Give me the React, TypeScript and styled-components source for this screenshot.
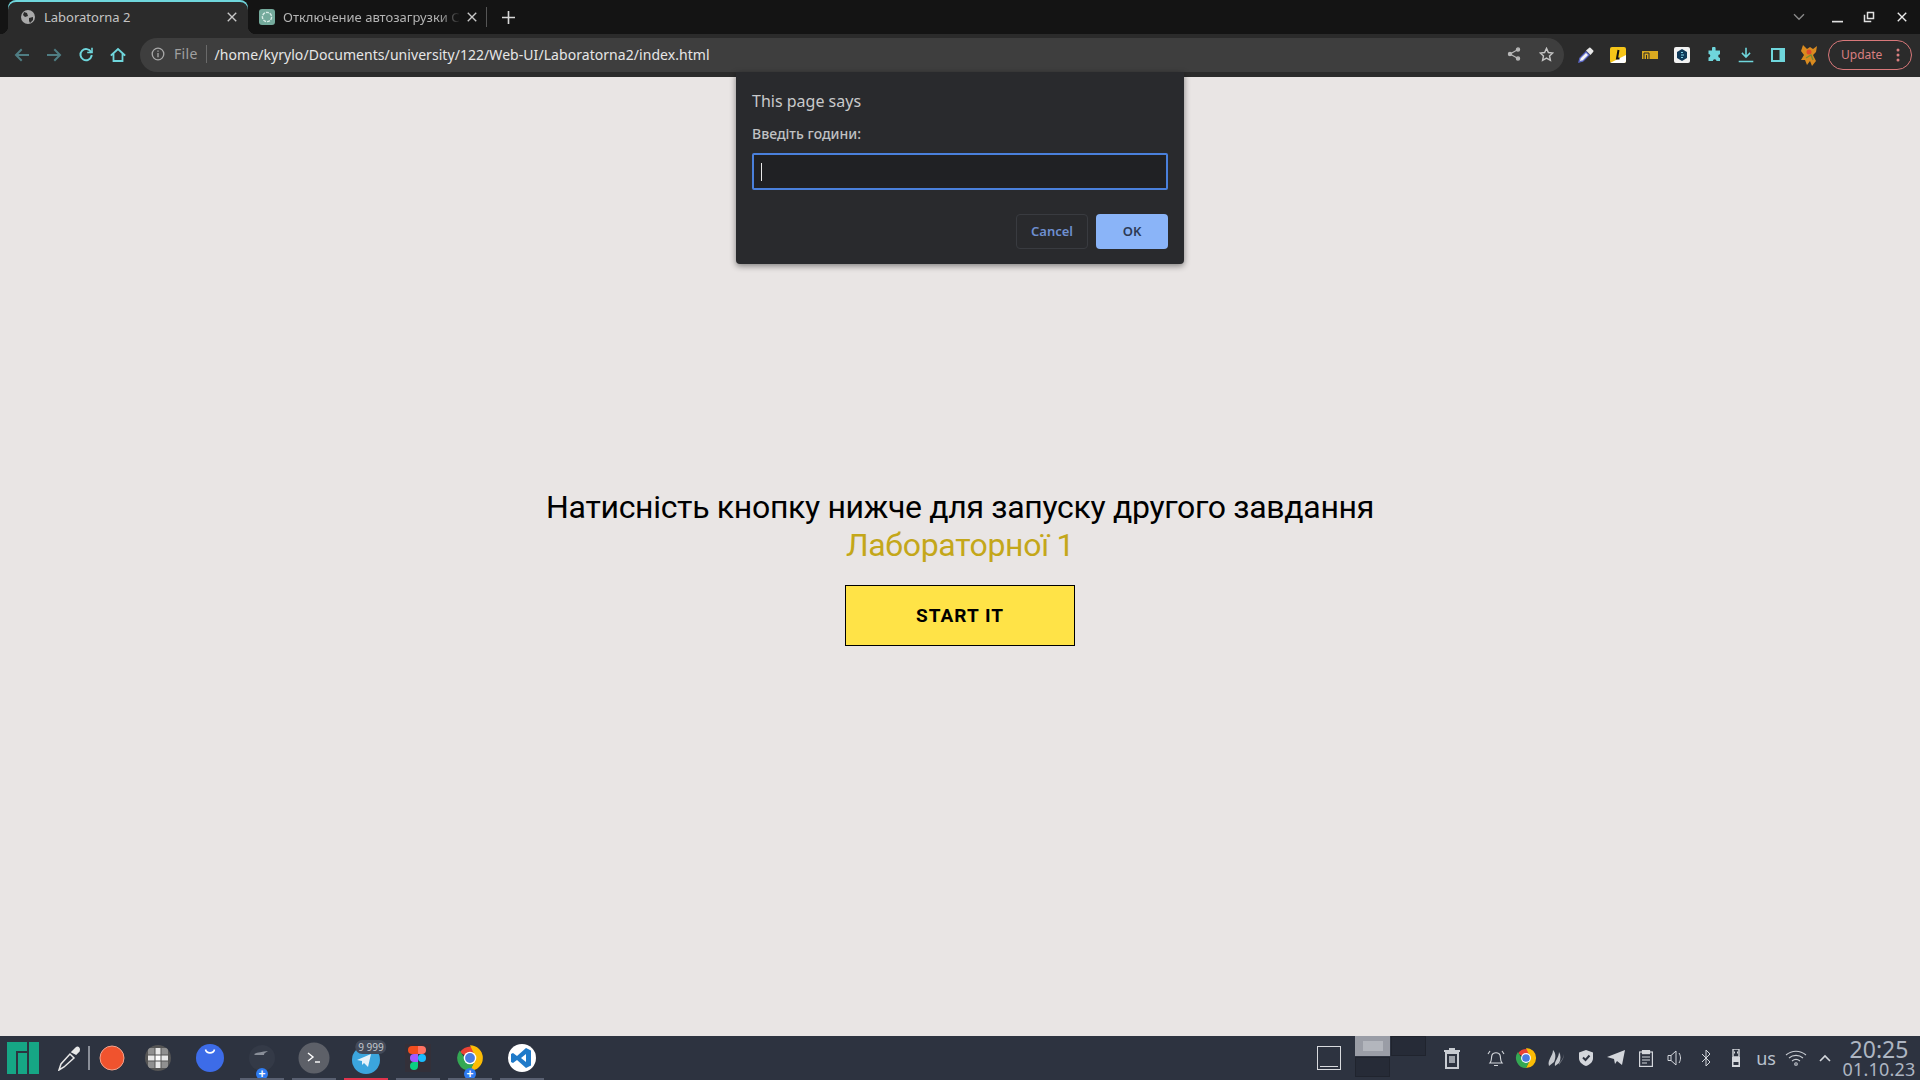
import React from "react";
import styled, { createGlobalStyle } from "styled-components";

const Global = createGlobalStyle`
  html, body { margin: 0; padding: 0; height: 100%; overflow: hidden; background: #e9e5e4; }
  #root { height: 100%; }
`;
const uiFont = `"Noto Sans", "Open Sans", sans-serif`;
const pageFont = `Roboto, "Liberation Sans", sans-serif`;

const Screen = styled.div`
  width: 1920px; height: 1080px; display: flex; flex-direction: column; position: relative; overflow: hidden;
  font-family: ${uiFont};
`;
const TabStrip = styled.div`
  height: 34px; flex: none; background: #141414; display: flex; align-items: stretch; padding-left: 8px; color: #c9c9c9;
`;
const ActiveTab = styled.div`
  width: 240px; display: flex; align-items: center; background: #2b2b2b; border-radius: 8px 8px 0 0; position: relative;
  padding: 0 11px 0 13px; box-sizing: border-box; gap: 9px; box-shadow: inset 0 2px 0 #6fd6dc;
  &::before, &::after { content: ""; position: absolute; bottom: 0; width: 8px; height: 8px; }
  &::before { left: -8px; background: radial-gradient(circle at 0 0, #141414 8px, #2b2b2b 8.5px); }
  &::after { right: -8px; background: radial-gradient(circle at 100% 0, #141414 8px, #2b2b2b 8.5px); }
`;
const IdleTab = styled.div`
  width: 238px; display: flex; align-items: center; padding: 0 9px 0 11px; box-sizing: border-box; gap: 8px;
  position: relative;
`;
const TabTitle = styled.span<{ $fade?: boolean }>`
  flex: 1; min-width: 0; font-size: 13px; white-space: nowrap; overflow: hidden; color: ${p => (p.$fade ? "#b4b4b4" : "#c4c4c4")};
  ${p => (p.$fade ? "mask-image: linear-gradient(90deg, #000 88%, rgba(0,0,0,.1) 100%);" : "")}
`;
const TabSep = styled.div`
  width: 1px; height: 20px; background: #555; align-self: center;
`;
const NewTab = styled.div`
  width: 42px; display: flex; align-items: center; justify-content: center;
`;
const StripRight = styled.div`
  margin-left: auto; display: flex; align-items: center; padding-right: 2px;
`;
const WinBtn = styled.div<{ $w: number; $gap?: number }>`
  width: ${p => p.$w}px; margin-left: ${p => p.$gap || 0}px; display: flex; justify-content: center; align-items: center;
`;
const Toolbar = styled.div`
  height: 43px; flex: none; background: #2b2b2b; display: flex; align-items: center; padding: 0 0 2px 6px; box-sizing: border-box;
`;
const NavBtn = styled.div`
  width: 32px; height: 32px; flex: none; display: flex; align-items: center; justify-content: center;
`;
const Omnibox = styled.div`
  width: 1424px; height: 34px; margin: 1px 6px 0 6px; background: #3e3e3e; border-radius: 17px; display: flex; align-items: center;
  padding: 0 0 2px 11px; box-sizing: border-box; flex: none; font-size: 14px;
`;
const OriginLabel = styled.span`
  color: #a0a0a0; font-size: 14px; margin-left: 9px; padding-right: 8px; border-right: 1px solid #6a6a6a; line-height: 18px; letter-spacing: .3px;
`;
const UrlText = styled.span`
  color: #e6e6e6; margin-left: 8px; font-size: 14px; letter-spacing: .055px;
`;
const OmniActions = styled.div`
  margin-left: auto; display: flex; padding-right: 2px;
`;
const UpdatePill = styled.div`
  margin-left: 2px; width: 84px; height: 30px; flex: none; border: 1px solid #d9787a; border-radius: 15px; box-sizing: border-box;
  display: flex; align-items: center; padding: 0 11px 0 12px; color: #d97f80; font-size: 12px; justify-content: space-between;
`;
const Page = styled.main`
  flex: 1; background: #e9e5e4; display: flex; flex-direction: column; align-items: center; padding-top: 411px; box-sizing: border-box;
  font-family: ${pageFont};
`;
const Heading = styled.h1`
  margin: 0; font-weight: 400; font-size: 32px; line-height: 38px; color: #000; text-align: center; letter-spacing: -0.32px;
`;
const Accent = styled.span`
  display: block; color: #c4a71a;
`;
const StartButton = styled.button`
  margin-top: 21px; width: 230px; height: 61px; background: #ffe347; border: 1px solid #000; font-family: ${pageFont};
  font-size: 19px; font-weight: 700; letter-spacing: 1px; color: #000; padding: 0;
`;
const Dialog = styled.div`
  position: absolute; left: 736px; top: 72px; width: 448px; height: 192px; background: #292a2d; border-radius: 0 0 4px 4px;
  box-shadow: 0 2px 6px rgba(0,0,0,.45); padding: 0 16px; box-sizing: border-box; display: flex; flex-direction: column;
`;
const DialogTitle = styled.div`
  color: #c8c9cb; font-size: 16px; line-height: 22px; margin-top: 18px;
`;
const DialogLabel = styled.div`
  color: #c0c1c3; font-size: 14px; font-weight: 500; line-height: 18px; margin-top: 13px;
`;
const PromptInput = styled.div`
  margin-top: 10px; height: 37px; background: #202124; border: 2px solid #4a80dc; border-radius: 2px; box-sizing: border-box;
  display: flex; align-items: center; padding-left: 7px;
`;
const Caret = styled.span`
  width: 1px; height: 18px; background: #e8e8e8;
`;
const DialogActions = styled.div`
  margin-top: 24px; display: flex; justify-content: flex-end; gap: 8px;
`;
const CancelBtn = styled.div`
  width: 72px; height: 35px; padding-bottom: 2px; border: 1px solid #393b40; border-radius: 4px; box-sizing: border-box; color: #6e8fd0;
  font-size: 13px; font-weight: 600; display: flex; align-items: center; justify-content: center;
`;
const OkBtn = styled(CancelBtn)`
  background: #8ab4f8; border: none; color: #2c3a55;
`;
const Taskbar = styled.footer`
  height: 44px; flex: none; background: #2d3340; display: flex; align-items: center; position: relative;
`;
const Slot = styled.div<{ $w: number; $pl?: number; $pt?: number }>`
  width: ${p => p.$w}px; height: 44px; flex: none; display: flex; align-items: center; justify-content: center; position: relative;
  box-sizing: border-box; padding: ${p => p.$pt || 0}px 0 0 ${p => p.$pl || 0}px;
`;
const Task = styled(Slot)<{ $bar?: string }>`
  &::after { content: ""; position: absolute; left: 4px; right: 4px; bottom: 0; height: 2px; background: ${p => p.$bar || "#596071"}; }
`;
const Divider = styled.div`
  width: 2px; height: 24px; flex: none; background: #8a8f99;
`;
const PlusBadge = styled.span`
  position: absolute; left: 50%; bottom: 0; transform: translateX(-50%); width: 12px; height: 12px; border-radius: 50%; background: #2f7bf0;
  color: #fff; font: 700 12px/12px "Liberation Sans", sans-serif; text-align: center; display: flex; align-items: center; justify-content: center;
`;
const CountBadge = styled.span`
  position: absolute; top: 4px; left: 50%; margin-left: 5px; transform: translateX(-50%); padding: 0 3px; height: 14px; line-height: 14px; border-radius: 7px;
  background: #434a59; color: #c2c6cc; font-size: 10px; white-space: nowrap;
`;
const Spacer = styled.div`
  flex: 1;
`;
const Pager = styled.div`
  width: 71px; height: 42px; flex: none; display: grid; grid-template-columns: 35px 35px; grid-template-rows: 20px 20px; gap: 1px; margin-top: -2px;
`;
const PagerCell = styled.div<{ $on?: boolean }>`
  background: ${p => (p.$on ? "#9a9da6" : "#262b37")}; display: flex; align-items: center; justify-content: center;
  outline: 1px solid ${p => (p.$on ? "#9a9da6" : "#20242e")}; outline-offset: -1px;
`;
const PagerThumb = styled.div`
  width: 20px; height: 10px; background: #b3b6bd;
`;
const TrayGap = styled.div`
  width: 14px; flex: none;
`;
const Layout = styled.span`
  color: #b8c0cc; font-size: 18px;
`;
const Clock = styled.div`
  width: 82px; flex: none; display: flex; flex-direction: column; align-items: center; color: #aeb6c2;
`;
const ClockTime = styled.span`
  font-size: 23px; line-height: 22px;
`;
const ClockDate = styled.span`
  font-size: 18px; line-height: 18px; letter-spacing: .2px;
`;

const teal = "#6fd6dc";
const Stroke = ({ s = 16, c = teal, w = 2, children }: { s?: number; c?: string; w?: number; children: React.ReactNode }) => (
  <svg width={s} height={s} viewBox="0 0 16 16" fill="none" stroke={c} strokeWidth={w} strokeLinecap="square">{children}</svg>
);
const Chrome = ({ s = 22 }: { s?: number }) => (
  <svg width={s} height={s} viewBox="0 0 24 24">
    <path d="M12 12 L3.2 7.2 A11 11 0 0 1 22 7.5 L12 7.5Z" fill="#ea4335" />
    <path d="M12 1 A11 11 0 0 1 12 23 L17 12 Z" fill="#fbbc05" />
    <path d="M3.2 5.5 A11 11 0 0 0 12 23 L17 13 L8 13Z" fill="#34a853" />
    <circle cx="12" cy="12" r="5.4" fill="#fff" />
    <circle cx="12" cy="12" r="4.2" fill="#4a7ce0" />
  </svg>
);
const Icon = {
  Globe: () => (
    <svg width="14" height="14" viewBox="0 0 14 14"><circle cx="7" cy="7" r="7" fill="#a9a9a9" /><path d="M3 2l3 1 1 3-3 1-2-2zM8 8l4-1 0 3-3 3-1-2z" fill="#2b2b2b" /></svg>
  ),
  Gpt: () => (
    <svg width="16" height="16" viewBox="0 0 16 16"><rect width="16" height="16" rx="3" fill="#74aa9c" /><circle cx="8" cy="8" r="4.6" fill="none" stroke="#d9ece7" strokeWidth="1.4" strokeDasharray="3 1" /></svg>
  ),
  X: ({ c = "#c9c9c9" }: { c?: string }) => <Stroke s={10} c={c} w={2.2}><path d="M2 2l12 12M14 2L2 14" /></Stroke>,
};

export default function App() {
  return (
    <Screen>
      <Global />
      <TabStrip>
        <ActiveTab>
          <Icon.Globe />
          <TabTitle>Laboratorna 2</TabTitle>
          <Icon.X />
        </ActiveTab>
        <IdleTab>
          <Icon.Gpt />
          <TabTitle $fade>Отключение автозагрузки С</TabTitle>
          <Icon.X />
        </IdleTab>
        <TabSep />
        <NewTab><Stroke s={13} c="#d8d8d8" w={2}><path d="M8 1v14M1 8h14" /></Stroke></NewTab>
        <StripRight>
          <WinBtn $w={32}><Stroke s={12} c="#8a8a8a" w={1.8}><path d="M2 5l6 6 6-6" /></Stroke></WinBtn>
          <WinBtn $w={32} $gap={6}><Stroke s={11} c="#e0e0e0" w={2.4}><path d="M1 14h14" /></Stroke></WinBtn>
          <WinBtn $w={32}>
            <Stroke s={12} c="#e0e0e0" w={2}><path d="M6 2h8v8H6zM2 6v8h8" /></Stroke>
          </WinBtn>
          <WinBtn $w={33}><Icon.X c="#ececec" /></WinBtn>
        </StripRight>
      </TabStrip>
      <Toolbar>
        <NavBtn><Stroke c="#4f7d83"><path d="M14 8H3M7 3L2 8l5 5" /></Stroke></NavBtn>
        <NavBtn><Stroke c="#4f7d83"><path d="M2 8h11M9 3l5 5-5 5" /></Stroke></NavBtn>
        <NavBtn><Stroke c={teal}><path d="M13 5a5.6 5.6 0 1 0 .5 4" /><path d="M10 5.5h4v-4" strokeWidth="1.6" /></Stroke></NavBtn>
        <NavBtn><Stroke c={teal} w={1.8}><path d="M1.5 8L8 2l6.5 6M3.5 7.5v6.5h9V7.5" /></Stroke></NavBtn>
        <Omnibox>
          <svg width="14" height="14" viewBox="0 0 14 14" fill="none" stroke="#a8a8a8" strokeWidth="1.3"><circle cx="7" cy="7" r="5.8" /><path d="M7 6v4.2M7 3.6v1.2" /></svg>
          <OriginLabel>File</OriginLabel>
          <UrlText>/home/kyrylo/Documents/university/122/Web-UI/Laboratorna2/index.html</UrlText>
          <OmniActions>
            <NavBtn><svg width="14" height="14" viewBox="0 0 14 14" fill="#b8b8b8" stroke="#b8b8b8" strokeWidth="1.2"><path d="M11 2.5L3 7l8 4.5" fill="none" /><circle cx="11" cy="2.5" r="1.6" /><circle cx="3" cy="7" r="1.6" /><circle cx="11" cy="11.5" r="1.6" /></svg></NavBtn>
            <NavBtn><svg width="15" height="15" viewBox="0 0 16 16" fill="none" stroke="#c4c4c4" strokeWidth="1.5"><path d="M8 1.5l2 4.4 4.7.5-3.5 3.2 1 4.7L8 11.9l-4.2 2.4 1-4.7L1.3 6.4 6 5.9z" /></svg></NavBtn>
          </OmniActions>
        </Omnibox>
        <NavBtn><svg width="16" height="16" viewBox="0 0 16 16"><path d="M1 15l1-4 6-6 3 3-6 6z" fill="#f4f4f4" stroke="#5c68c8" strokeWidth="1.3" /><path d="M8 3.500l3.500-3 1 .2 3 3-.2 1L12.500 8z" fill="#e8e8e8" /></svg></NavBtn>
        <NavBtn><svg width="16" height="16" viewBox="0 0 16 16"><rect width="16" height="16" rx="2" fill="#f5c518" /><path d="M0 16L16 8v6a2 2 0 0 1-2 2z" fill="#fff" /><path d="M8.500 3L7 11.500h2.500" fill="none" stroke="#111" strokeWidth="2" /></svg></NavBtn>
        <NavBtn><svg width="16" height="12" viewBox="0 0 16 12"><rect y="2" width="16" height="8" fill="#d9a920" /><path d="M2 10V4h5v6M4.500 10V6" fill="none" stroke="#2b2b2b" strokeWidth="1" /></svg></NavBtn>
        <NavBtn><svg width="16" height="16" viewBox="0 0 16 16"><rect width="16" height="16" rx="2" fill="#f2f2f2" /><path d="M8 2l5 3v6l-5 3-5-3V5z" fill="#103a5a" /><path d="M7 5.500h2M7 8h3M7 10.500h2" stroke="#7fd0e8" strokeWidth="1.2" /></svg></NavBtn>
        <NavBtn><svg width="16" height="16" viewBox="0 0 16 16" fill={teal}><path d="M6 1.500a1.800 1.800 0 0 1 3.600 0V3.500H14v3.800a1.800 1.800 0 0 0 0 3.600V14H10.500a1.800 1.800 0 0 0-3.600 0H2.500v-3.500a1.800 1.800 0 0 0 0-3.600V3.500H6z" /></svg></NavBtn>
        <NavBtn><Stroke c={teal} w={1.6}><path d="M8 1.500v8M4.500 6.500L8 10l3.500-3.500M1.500 14.500h13" /></Stroke></NavBtn>
        <NavBtn><svg width="14" height="14" viewBox="0 0 14 14"><path fill={teal} d="M0 0h14v14H0z" /><path fill="#2b2b2b" d="M2 2h6.500v10H2z" /></svg></NavBtn>
        <NavBtn>
          <svg width="20" height="22" viewBox="0 0 20 22">
            <path d="M3 1l4 4 3-2 3 2 4-3-1 6-3 3 3 6-4 5-2-5-3 4-2-5-4 0 3-5-3-4z" fill="#d98a1f" /><circle cx="9" cy="8" r="2.500" fill="#e24a2a" /><path d="M6 14l5-3 2 5" fill="none" stroke="#7a8a30" strokeWidth="1.4" />
          </svg>
        </NavBtn>
        <UpdatePill>
          Update
          <svg width="4" height="14" viewBox="0 0 4 14" fill="#d97f80"><circle cx="2" cy="2" r="1.500" /><circle cx="2" cy="7" r="1.500" /><circle cx="2" cy="12" r="1.500" /></svg>
        </UpdatePill>
      </Toolbar>
      <Page>
        <Heading>
          Натисність кнопку нижче для запуску другого завдання
          <Accent>Лабораторної 1</Accent>
        </Heading>
        <StartButton>START IT</StartButton>
      </Page>
      <Dialog>
        <DialogTitle>This page says</DialogTitle>
        <DialogLabel>Введіть години:</DialogLabel>
        <PromptInput><Caret /></PromptInput>
        <DialogActions>
          <CancelBtn>Cancel</CancelBtn>
          <OkBtn>OK</OkBtn>
        </DialogActions>
      </Dialog>
      <Taskbar>
        <Slot $w={46}>
          <svg width="32" height="32" viewBox="0 0 32 32" fill="#16a685"><path d="M0 0h20v9H9v23H0z" /><path d="M11 11h9v21h-9z" /><path d="M22 0h10v32H22z" /></svg>
        </Slot>
        <Slot $w={42} $pl={5}>
          <svg width="24" height="26" viewBox="0 0 24 26" fill="none" stroke="#e8e8e8" strokeWidth="1.5"><path d="M1 25l2-6 9-10 4 4-10 9z" fill="#2d3340" /><path d="M14 7l4-4c2-1.800 4 .2 3 3l-3 3z" fill="#e8e8e8" /></svg>
        </Slot>
        <Divider />
        <Slot $w={44}>
          <svg width="26" height="26" viewBox="0 0 26 26"><circle cx="13" cy="13" r="12" fill="#f0532e" stroke="#f2a58f" strokeWidth="1" /></svg>
        </Slot>
        <Slot $w={48}>
          <svg width="26" height="26" viewBox="0 0 26 26">
            <defs><clipPath id="gridClip"><circle cx="13" cy="13" r="13" /></clipPath></defs>
            <g clipPath="url(#gridClip)">
              <rect width="26" height="26" fill="#555" />
              <path fill="#909090" d="M3 3h6.500v6.500H3zM16.500 3H23v6.500h-6.500zM3 16.500h6.500V23H3zM16.500 16.500H23V23h-6.500z" />
              <path fill="#e8e8e8" d="M10.500 3h5v6.500h-5zM3 10.500h6.500v5H3zM16.500 10.500H23v5h-6.500zM10.500 16.500h5V23h-5z" />
              <path fill="#fff" d="M10.500 10.500h5v5h-5z" />
            </g>
          </svg>
        </Slot>
        <Slot $w={54} $pl={2}>
          <svg width="28" height="28" viewBox="0 0 28 28"><circle cx="14" cy="14" r="14" fill="#3d6ce8" /><path d="M9.500 5.500c1 4.500 8 4.500 9 0" fill="none" stroke="#fff" strokeWidth="1.6" /></svg>
        </Slot>
        <Task $w={52}>
          <svg width="26" height="26" viewBox="0 0 26 26"><circle cx="13" cy="13" r="13" fill="#343a47" /><path d="M5 9c4-2 8-2 14-3-3 2-4 2-4 4H6z" fill="#8a8f99" /></svg>
          <PlusBadge>+</PlusBadge>
        </Task>
        <Task $w={52}>
          <svg width="32" height="32" viewBox="0 0 32 32"><circle cx="16" cy="16" r="15.500" fill="#5d6068" /><path d="M10 11l5 4-5 4" fill="none" stroke="#fff" strokeWidth="1.400" /><path d="M17 20h5" stroke="#fff" strokeWidth="1.400" /></svg>
        </Task>
        <Task $w={52} $bar="#e0344d" $pt={4}>
          <svg width="28" height="28" viewBox="0 0 28 28"><circle cx="14" cy="14" r="14" fill="#3ba5dd" /><path d="M5 14l14-6-3 13-4-4-2 2v-4z" fill="#e6f2f9" /></svg>
          <CountBadge>9 999</CountBadge>
        </Task>
        <Task $w={52}>
          <svg width="26" height="28" viewBox="0 0 26 28">
            <rect width="26" height="28" fill="#333039" />
            <path d="M7 2h6v8H7a4 4 0 0 1 0-8z" fill="#f24e1e" /><path d="M13 2h4a4 4 0 0 1 0 8h-4z" fill="#ff7262" />
            <path d="M9 10h4v8H9a4 4 0 0 1 0-8z" fill="#a259ff" /><circle cx="17" cy="14" r="4" fill="#1abcfe" />
            <path d="M9 18h4v4a4 4 0 1 1-4-4z" fill="#0acf83" />
          </svg>
        </Task>
        <Task $w={52}>
          <Chrome s={28} />
          <PlusBadge>+</PlusBadge>
        </Task>
        <Task $w={52}>
          <svg width="28" height="28" viewBox="0 0 28 28"><circle cx="14" cy="14" r="14" fill="#fff" /><path d="M18 4l5 2.500v15L18 24 9 16l-4 3-2-1v-8l2-1 4 3zM18 10l-5 4 5 4z" fill="#1f7ac9" fillRule="evenodd" /></svg>
        </Task>
        <Spacer />
        <Slot $w={24}>
          <svg width="24" height="24" viewBox="0 0 24 24" fill="none" stroke="#d8dade" strokeWidth="1"><rect x=".5" y=".5" width="23" height="23" /><path d="M3 20.500h18" /></svg>
        </Slot>
        <Slot $w={14} />
        <Pager>
          <PagerCell $on><PagerThumb /></PagerCell>
          <PagerCell />
          <PagerCell />
        </Pager>
        <Slot $w={11} />
        <Slot $w={30}>
          <svg width="18" height="22" viewBox="0 0 18 22"><path d="M1 3h16v2H1zM6 1h6v2H6z" fill="#c8ccd2" /><path d="M3 6h12v15H3z" fill="none" stroke="#c8ccd2" strokeWidth="2" /><rect x="6" y="9" width="6" height="7" fill="#9da2aa" /></svg>
        </Slot>
        <TrayGap />
        <Slot $w={30}>
          <svg width="18" height="20" viewBox="0 0 18 20" fill="none" stroke="#d4d7dc" strokeWidth="1.100"><path d="M3 15c2-2 1-5 2-8s7-3 8 0 0 6 2 8zM7 17.500h4M1 6l2-3M17 6l-2-3" /></svg>
        </Slot>
        <Slot $w={30}><Chrome /></Slot>
        <Slot $w={30}>
          <svg width="18" height="20" viewBox="0 0 18 20"><path d="M2 18C0 12 6 8 6 2c3 3 3 8 1 12zM8 18c-1-5 4-8 4-14 2 3 2 8 0 11z" fill="#c6c9ce" /><path d="M12 17c2-3 5-6 5-11-1 5-3 7-5 9z" fill="#6f747d" /></svg>
        </Slot>
        <Slot $w={30}>
          <svg width="14" height="16" viewBox="0 0 14 16"><path d="M7 0l7 2.500V8c0 4-3 6.500-7 8-4-1.500-7-4-7-8V2.500z" fill="#d4d7dc" /><path d="M4 7.500l2.500 2.500L10.500 5.500" fill="none" stroke="#2d3340" strokeWidth="2" /></svg>
        </Slot>
        <Slot $w={30}>
          <svg width="18" height="16" viewBox="0 0 18 16"><path d="M0 7L18 0l-3 15-5-4-2 3-1-5z" fill="#d4d7dc" /></svg>
        </Slot>
        <Slot $w={30}>
          <svg width="14" height="17" viewBox="0 0 14 17" fill="none" stroke="#d4d7dc" strokeWidth="1.200"><rect x=".6" y="2" width="12.800" height="14.400" /><rect x="3.500" y=".6" width="7" height="3" fill="#d4d7dc" /><path d="M3 7h8M3 10h8M3 13h5" /></svg>
        </Slot>
        <Slot $w={30}>
          <svg width="18" height="16" viewBox="0 0 18 16" fill="none" stroke="#d4d7dc" strokeWidth="1"><path d="M1 5.500h3v5H1zM4 5.500L9 1v14l-5-4.500" /><path d="M12 3c2 3 2 7 0 10" /></svg>
        </Slot>
        <Slot $w={30}>
          <svg width="10" height="18" viewBox="0 0 10 18" fill="none" stroke="#d4d7dc" strokeWidth="1"><path d="M1 5l8 8-4 4V1l4 4-8 8" /></svg>
        </Slot>
        <Slot $w={30}>
          <svg width="10" height="18" viewBox="0 0 10 18"><path d="M2 0h6v8H2z" fill="none" stroke="#d4d7dc" strokeWidth="1.400" /><path d="M1 8h8v10H1z" fill="#d4d7dc" /><path d="M3 2.500h1v2H3zM6 2.500h1v2H6z" fill="#d4d7dc" /><path d="M2.500 13h5v3h-5z" fill="#2d3340" /></svg>
        </Slot>
        <Slot $w={30}><Layout>us</Layout></Slot>
        <Slot $w={30}>
          <svg width="22" height="16" viewBox="0 0 22 16" fill="none" stroke="#c8ccd2" strokeWidth="1.100"><path d="M1 5c6-5 14-5 20 0M4 8c4-3.500 10-3.500 14 0M7 11c2.500-2 5.500-2 8 0" /><circle cx="11" cy="14" r="1.300" /></svg>
        </Slot>
        <Slot $w={27}>
          <svg width="12" height="8" viewBox="0 0 12 8" fill="none" stroke="#d4d7dc" strokeWidth="1.600"><path d="M1 7l5-5 5 5" /></svg>
        </Slot>
        <Clock>
          <ClockTime>20:25</ClockTime>
          <ClockDate>01.10.23</ClockDate>
        </Clock>
      </Taskbar>
    </Screen>
  );
}
